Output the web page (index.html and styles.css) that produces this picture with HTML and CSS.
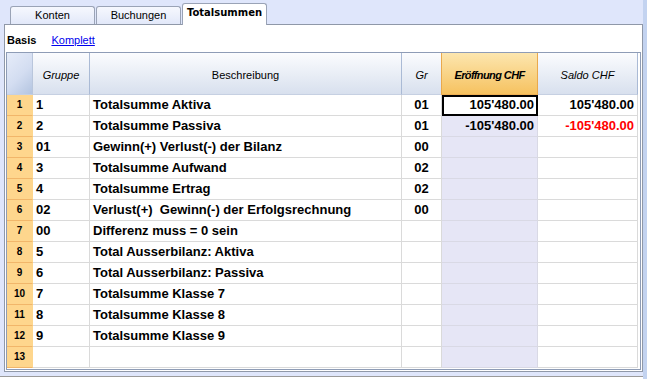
FILE: index.html
```html
<!DOCTYPE html>
<html lang="de">
<head>
    <meta charset="UTF-8">
    <title>Totalsummen</title>
    <link rel="stylesheet" href="styles.css">
</head>
<body>
    <div class="window">
        <div class="main">
            <div class="tabs">
                <div class="tab">Konten</div>
                <div class="tab">Buchungen</div>
                <div class="tab active">Totalsummen</div>
            </div>

            <div class="panel">
                <div class="views">
                    <span class="view-current">Basis</span>
                    <a class="view-link" href="#">Komplett</a>
                </div>

                <div class="grid">
                    <div class="hcell corner"></div>
                    <div class="hcell">Gruppe</div>
                    <div class="hcell plain">Beschreibung</div>
                    <div class="hcell">Gr</div>
                    <div class="hcell hot">Eröffnung CHF</div>
                    <div class="hcell">Saldo CHF</div>

                    <div class="num">1</div><div class="cell">1</div><div class="cell">Totalsumme Aktiva</div><div class="cell center">01</div><div class="cell open amount selected">105'480.00</div><div class="cell amount">105'480.00</div>
                    <div class="num">2</div><div class="cell">2</div><div class="cell">Totalsumme Passiva</div><div class="cell center">01</div><div class="cell open amount">-105'480.00</div><div class="cell amount negative">-105'480.00</div>
                    <div class="num">3</div><div class="cell">01</div><div class="cell">Gewinn(+) Verlust(-) der Bilanz</div><div class="cell center">00</div><div class="cell open"></div><div class="cell"></div>
                    <div class="num">4</div><div class="cell">3</div><div class="cell">Totalsumme Aufwand</div><div class="cell center">02</div><div class="cell open"></div><div class="cell"></div>
                    <div class="num">5</div><div class="cell">4</div><div class="cell">Totalsumme Ertrag</div><div class="cell center">02</div><div class="cell open"></div><div class="cell"></div>
                    <div class="num">6</div><div class="cell">02</div><div class="cell">Verlust(+)&nbsp; Gewinn(-) der Erfolgsrechnung</div><div class="cell center">00</div><div class="cell open"></div><div class="cell"></div>
                    <div class="num">7</div><div class="cell">00</div><div class="cell">Differenz muss = 0 sein</div><div class="cell center"></div><div class="cell open"></div><div class="cell"></div>
                    <div class="num">8</div><div class="cell">5</div><div class="cell">Total Ausserbilanz: Aktiva</div><div class="cell center"></div><div class="cell open"></div><div class="cell"></div>
                    <div class="num">9</div><div class="cell">6</div><div class="cell">Total Ausserbilanz: Passiva</div><div class="cell center"></div><div class="cell open"></div><div class="cell"></div>
                    <div class="num">10</div><div class="cell">7</div><div class="cell">Totalsumme Klasse 7</div><div class="cell center"></div><div class="cell open"></div><div class="cell"></div>
                    <div class="num">11</div><div class="cell">8</div><div class="cell">Totalsumme Klasse 8</div><div class="cell center"></div><div class="cell open"></div><div class="cell"></div>
                    <div class="num">12</div><div class="cell">9</div><div class="cell">Totalsumme Klasse 9</div><div class="cell center"></div><div class="cell open"></div><div class="cell"></div>
                    <div class="num">13</div><div class="cell"></div><div class="cell"></div><div class="cell center"></div><div class="cell open"></div><div class="cell"></div>
                </div>
            </div>

            <div class="statusbar"></div>
        </div>
        <div class="edge"></div>
    </div>
</body>
</html>
```

FILE: styles.css
```css
body {
    margin: 0;
    height: 379px;
    overflow: hidden;
    font-family: "Liberation Sans", Arial, sans-serif;
    background-color: #dfe6fb;
}
.window {
    display: flex;
    height: 379px;
}
.main {
    width: 643px;
    display: flex;
    flex-direction: column;
}
.edge {
    flex: 1;
    background-color: #c3d3f0;
}

/* tabs */
.tabs {
    height: 24px;
    padding-left: 10px;
    display: flex;
    align-items: flex-end;
    gap: 1px;
    box-sizing: border-box;
}
.tab {
    width: 85px;
    height: 18px;
    box-sizing: border-box;
    border: 1px solid #9aa3b6;
    border-bottom: none;
    border-radius: 3px 3px 0 0;
    background: linear-gradient(#f6f8fe, #e2e8f9);
    font-size: 11px;
    line-height: 17px;
    text-align: center;
    color: #000;
}
.tab.active {
    height: 22px;
    margin-bottom: -1px;
    position: relative;
    z-index: 1;
    background: #fff;
    font-family: "DejaVu Sans", sans-serif;
    font-weight: bold;
    font-size: 10px;
    line-height: 18px;
}

/* panel */
.panel {
    margin-left: 4px;
    width: 639px;
    height: 348px;
    box-sizing: border-box;
    border: 1px solid #8f98a8;
    background-color: #fff;
    padding: 0 1px 1px 1px;
}
.views {
    height: 27px;
    box-sizing: border-box;
    padding: 9px 0 0 1px;
    font-size: 11px;
    line-height: 13px;
}
.view-current {
    font-weight: bold;
    margin-right: 12px;
}
.view-link {
    color: #0000ee;
}

/* grid */
.grid {
    height: 318px;
    box-sizing: border-box;
    border: 1px solid #8e9cb6;
    display: grid;
    grid-template-columns: 26px 57px 312px 40px 96px 100px;
    grid-template-rows: 42px repeat(13, 21px);
    align-content: start;
}
.hcell {
    box-sizing: border-box;
    border-right: 1px solid #aabad5;
    border-bottom: 1px solid #c6d0e2;
    background: linear-gradient(#fbfcfe, #d8e0ee);
    font-size: 11px;
    font-style: italic;
    display: flex;
    align-items: center;
    justify-content: center;
    padding-top: 2px;
}
.hcell.plain {
    font-style: normal;
}
.hcell.corner {
    background: linear-gradient(135deg, #e6ecf9 0%, #d3ddf1 55%, #b3c4e0 100%);
    border-right-color: #b9c6dc;
}
.hcell.hot {
    background: linear-gradient(#fce6af, #f6c260);
    border-left: 1px solid #e9a94d;
    border-right-color: #e9a94d;
    border-bottom-color: #eeb055;
    font-weight: bold;
    letter-spacing: -0.6px;
    margin-left: -1px;
}
.num {
    box-sizing: border-box;
    background-color: #fed68d;
    border-bottom: 1px solid #f1b66a;
    border-right: 1px solid #fed68d;
    font-size: 10px;
    font-weight: bold;
    line-height: 20px;
    text-align: center;
}
.cell {
    box-sizing: border-box;
    border-right: 1px solid #dadada;
    border-bottom: 1px solid #dadada;
    padding: 0 3px;
    font-size: 13px;
    font-weight: bold;
    line-height: 20px;
    white-space: nowrap;
    overflow: hidden;
}
.cell.center {
    text-align: center;
}
.cell.amount {
    text-align: right;
}
.cell.open {
    background-color: #e6e6f6;
    border-color: #d9d9e5;
}
.cell.selected {
    background-color: #fff;
    outline: 2px solid #000;
    outline-offset: -2px;
}
.negative {
    color: #ff0000;
}

.statusbar {
    flex: 1;
    margin-top: 4px;
    border-top: 1px solid #9b9b9b;
    background-color: #fff;
}
```
